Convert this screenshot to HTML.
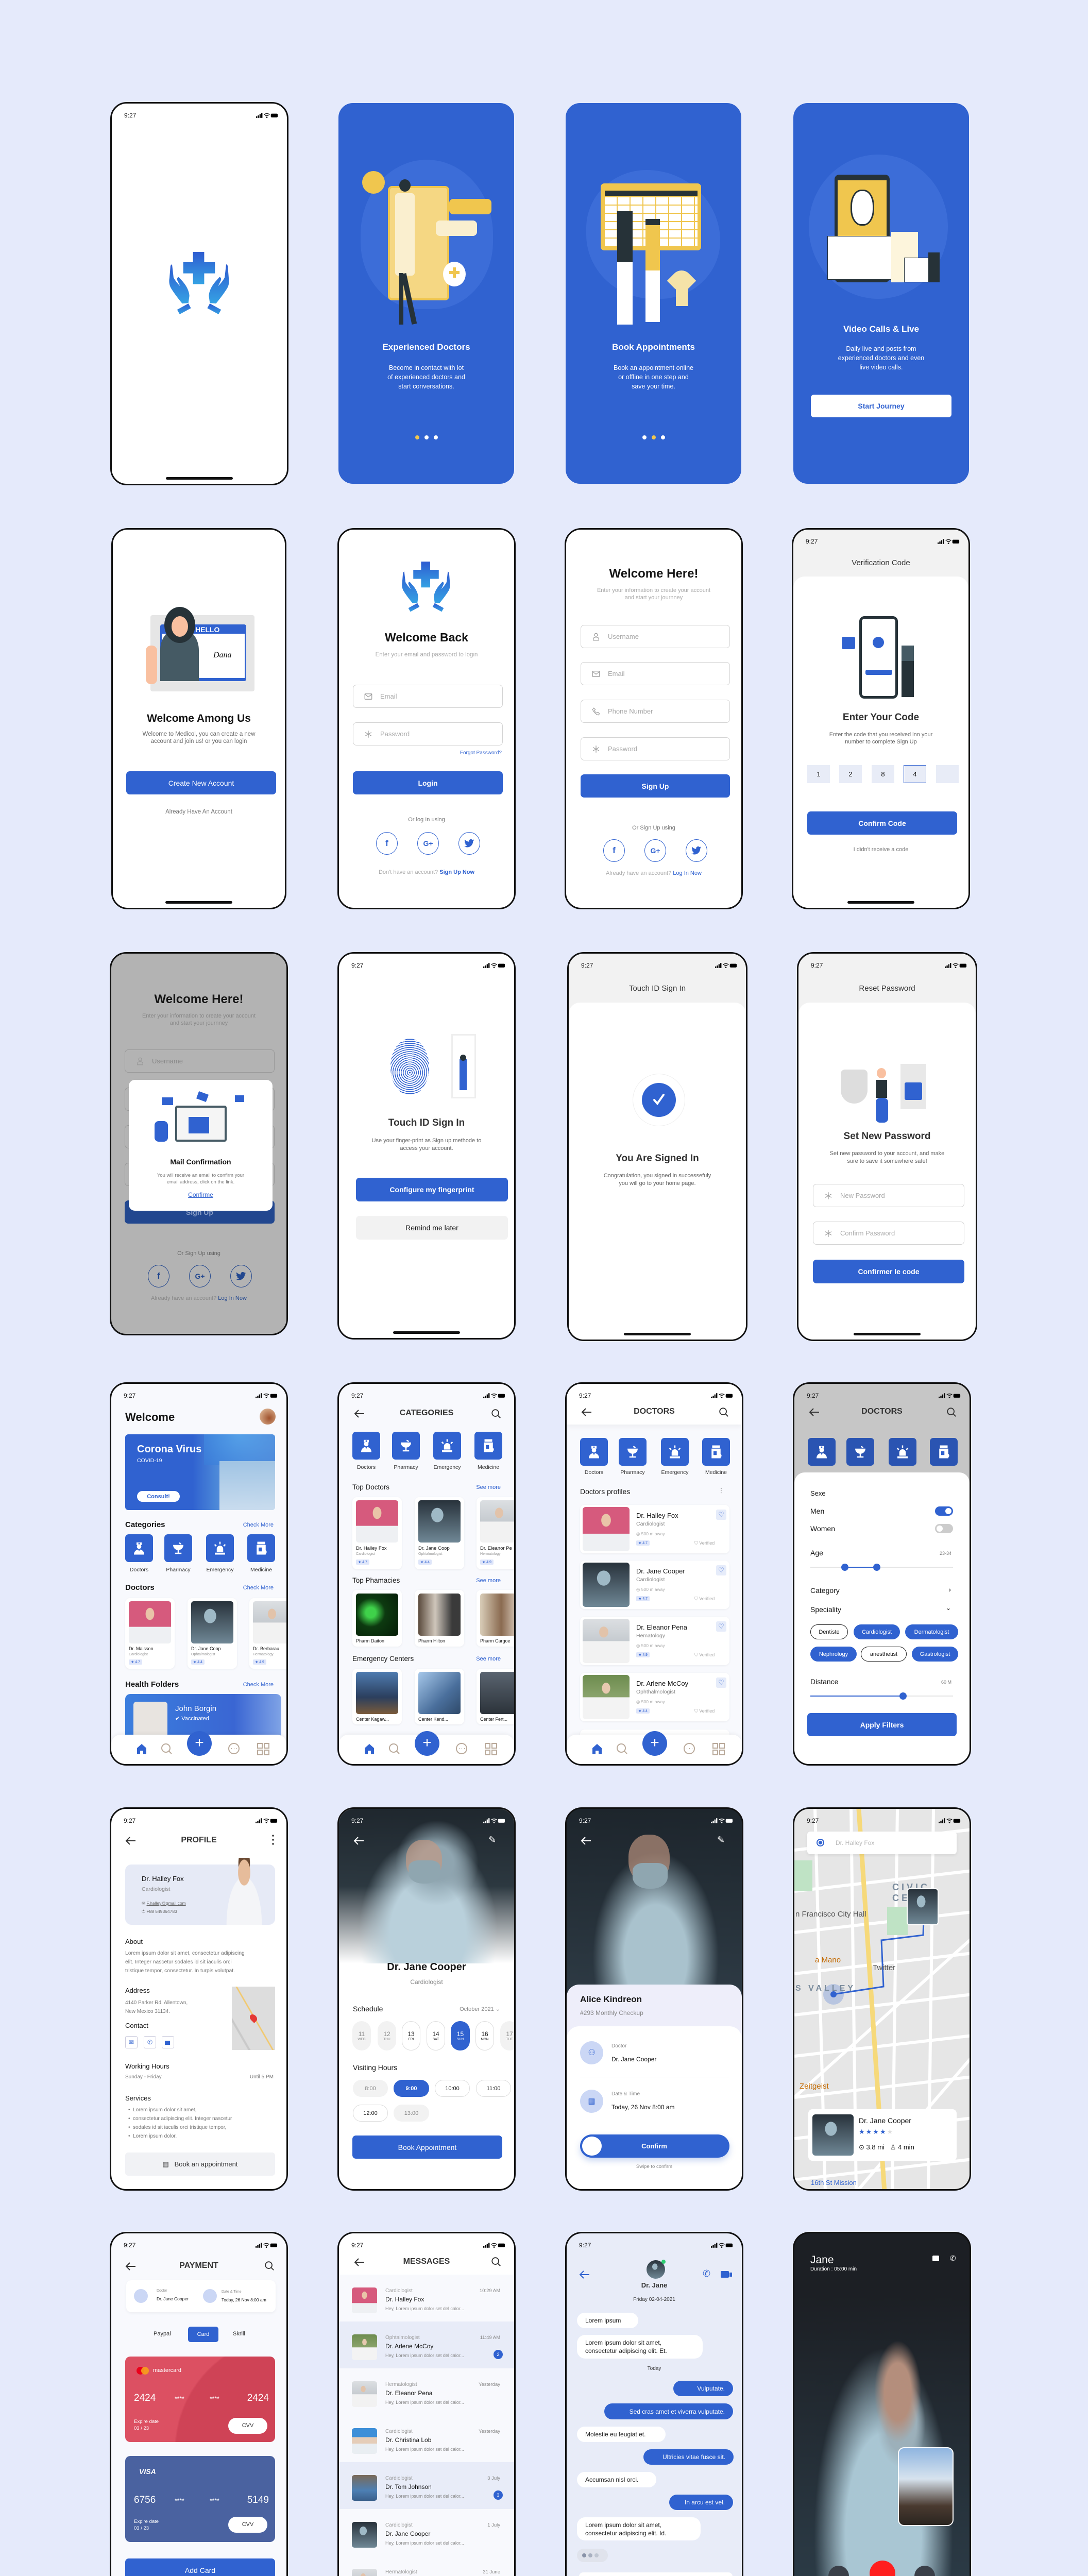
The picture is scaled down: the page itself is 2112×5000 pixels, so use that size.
<!DOCTYPE html>
<html><head><meta charset="utf-8">
<style>
*{box-sizing:border-box;margin:0;padding:0}
body{width:2112px;height:5000px;background:#e5eafb;font-family:"Liberation Sans",sans-serif;color:#151515;position:relative;overflow:hidden}
.p{position:absolute;width:346px;height:744px;border:3px solid #111;border-radius:32px;background:#fff;overflow:hidden}
.p.cut{height:668px !important;border-bottom:0;border-radius:32px 32px 0 0}
.bc{position:absolute;width:341px;height:739px;border-radius:28px;background:#3062d0;overflow:hidden;color:#fff}
.a{position:absolute}
.c{position:absolute;left:0;right:0;text-align:center}
.tm{position:absolute;left:24px;top:16px;font-size:12px}
.sb{position:absolute;right:16px;top:17px;width:44px;height:12px}
.hb{position:absolute;left:50%;bottom:8px;width:130px;height:5px;margin-left:-65px;background:#111;border-radius:3px}
.btn{position:absolute;background:#3062d0;color:#fff;border-radius:7px;display:flex;align-items:center;justify-content:center;font-weight:bold;font-size:14px}
.fld{position:absolute;left:28px;width:290px;height:45px;border:1px solid #d4d4d4;border-radius:7px;color:#aaa;font-size:13px;display:flex;align-items:center;padding-left:52px}
.fld svg{position:absolute;left:20px;top:13px;width:18px;height:18px}
.soc{position:absolute;width:42px;height:44px;border:1.5px solid #3062d0;border-radius:50%;display:flex;align-items:center;justify-content:center;color:#3062d0;font-weight:bold;font-size:17px}
.h1{font-weight:bold;font-size:21px}
.tile{position:absolute;width:54px;height:54px;background:#3062d0;border-radius:7px;display:flex;align-items:center;justify-content:center}
.tile svg{width:30px;height:30px;fill:#fff}
.tl{position:absolute;width:80px;text-align:center;font-size:10.5px;color:#333}
.card{position:absolute;background:#fff;border-radius:9px;box-shadow:0 1px 4px rgba(0,0,0,.06)}
.nav{position:absolute;left:0;right:0;bottom:0;height:57px;background:#fff;border-radius:18px 18px 0 0;box-shadow:0 -2px 8px rgba(0,0,0,.06)}
.fab{position:absolute;width:48px;height:48px;border-radius:50%;background:#3062d0;color:#fff;font-size:30px;line-height:46px;text-align:center;left:147px;top:674px}
.pill{position:absolute;border-radius:16px;display:flex;align-items:center;justify-content:center;font-size:11px}
.rate{position:absolute;background:#dfe6fa;color:#3062d0;font-size:7px;padding:1px 4px;border-radius:2px}
.hd{font-weight:bold;font-size:16px;color:#333}
.ph1{background:radial-gradient(ellipse at 50% 30%,#e9c4a8 0 14%,transparent 15%),linear-gradient(#d65a7d 0,#d65a7d 60%,#eef0f3 61%)}
.ph2{background:radial-gradient(ellipse at 45% 35%,#9fb9c6 0 18%,transparent 19%),linear-gradient(#28323b,#6f8795)}
.ph3{background:radial-gradient(ellipse at 45% 30%,#e2c3aa 0 12%,transparent 13%),linear-gradient(#dcdfe2 0,#c6cbd0 50%,#f2f2f2 51%)}
.ph4{background:radial-gradient(ellipse at 50% 30%,#e7c9af 0 12%,transparent 13%),linear-gradient(#6d8c4f 0,#8aa36b 50%,#f3f3f3 51%)}
.mrow{position:absolute;left:0;right:0;height:91px}
.av{position:absolute;left:25px;top:25px;width:49px;height:50px;border-radius:5px}
.bub{position:absolute;background:#fff;border-radius:16px;font-size:12px;padding:0 16px;display:flex;align-items:center;line-height:16px;color:#222}
.bub.b{background:#3062d0;color:#fff;justify-content:flex-end}
</style></head><body>
<svg width="0" height="0" style="position:absolute">
<symbol id="sb" viewBox="0 0 46 12"><rect x="0" y="8" width="2.5" height="3"/><rect x="3.5" y="6" width="2.5" height="5"/><rect x="7" y="3.5" width="2.5" height="7.5"/><rect x="10.5" y="1" width="2.5" height="10"/><path d="M16.5 4.5a8 8 0 0 1 11 0M18.8 7a5 5 0 0 1 6.4 0" stroke="currentColor" fill="none" stroke-width="1.6"/><circle cx="22" cy="9.8" r="1.4"/><rect x="30" y="2.5" width="14" height="7.5" rx="2"/></symbol>
<linearGradient id="lg" x1="0" y1="0" x2="0" y2="1"><stop offset="0" stop-color="#2e5bd0"/><stop offset="1" stop-color="#35a2e4"/></linearGradient>
<symbol id="logo" viewBox="0 0 130 124"><g fill="url(#lg)"><path d="M53 0h22v20h21v22H75v21H53V42H34V20h19z"/><path d="M9 27l3-3 3 26q4 8 13 17l-5-10q-3-6 2-8l8 9q12 14 13 28l-2 14-12 1q-14-17-22-30-5-9-3-20z"/><path d="M121 27l-3-3-3 26q-4 8-13 17l5-10q3-6-2-8l-8 9q-12 14-13 28l2 14 12 1q14-17 22-30 5-9 3-20z"/><path d="M22 113l22-12 5 9-22 12z"/><path d="M108 113l-22-12-5 9 22 12z"/></g></symbol>
<symbol id="doc" viewBox="0 0 24 24"><path d="M8 3h8v4H8z"/><path d="M11 3.7h2v2.6h-2z" fill="#3062d0"/><circle cx="12" cy="9.5" r="3.5"/><path d="M4 22c0-5 3.5-8 8-8s8 3 8 8z"/><path d="M10.5 14l1.5 3 1.5-3z" fill="#3062d0"/></symbol>
<symbol id="pha" viewBox="0 0 24 24"><path d="M4 7h16a8 8 0 0 1-16 0z"/><path d="M11 14h2v5h4v2H7v-2h4z"/><path d="M13 3a4 4 0 0 1 4 3h-2a2 2 0 0 0-2-1z"/></symbol>
<symbol id="eme" viewBox="0 0 24 24"><path d="M7 18v-5a5 5 0 0 1 10 0v5zM4 19h16v3H4zM11 2h2v4h-2zM3 7l1.5-1.5 2.5 2.5L5.5 9.5zM21 7l-1.5-1.5L17 8l1.5 1.5z"/></symbol>
<symbol id="med" viewBox="0 0 24 24"><path d="M6 2h12v4H6zM5 7h14v15H5z"/><path d="M8 11h5v6H8z" fill="#3062d0"/><circle cx="17" cy="18" r="3.5"/></symbol>
<symbol id="back" viewBox="0 0 24 24"><path d="M21 12H4M10 5l-7 7 7 7" fill="none" stroke="currentColor" stroke-width="2"/></symbol>
<symbol id="srch" viewBox="0 0 24 24"><circle cx="10.5" cy="10.5" r="7" fill="none" stroke="currentColor" stroke-width="2"/><path d="M16 16l5 5" stroke="currentColor" stroke-width="2"/></symbol>
<symbol id="mail" viewBox="0 0 24 24"><rect x="3" y="5" width="18" height="14" rx="1" fill="none" stroke="#999" stroke-width="1.6"/><path d="M3 6l9 7 9-7" fill="none" stroke="#999" stroke-width="1.6"/></symbol>
<symbol id="ast" viewBox="0 0 24 24"><path d="M12 3v18M4 7.5l16 9M20 7.5l-16 9" stroke="#999" stroke-width="1.6"/></symbol>
<symbol id="usr" viewBox="0 0 24 24"><circle cx="12" cy="7" r="4" fill="none" stroke="#999" stroke-width="1.6"/><path d="M5 21v-3a5 5 0 0 1 5-5h4a5 5 0 0 1 5 5v3z" fill="none" stroke="#999" stroke-width="1.6"/></symbol>
<symbol id="tel" viewBox="0 0 24 24"><path d="M6 3l4 4-2 3q2 4 6 6l3-2 4 4-3 3Q10 20 3 7z" fill="none" stroke="#999" stroke-width="1.6"/></symbol>
<symbol id="navi" viewBox="0 0 290 30"><path d="M40 14l9-8 9 8v12h-6v-7h-6v7h-6z" fill="#3062d0"/><circle cx="96" cy="14" r="8" fill="none" stroke="#b9a99a" stroke-width="2"/><path d="M102 20l5 5" stroke="#b9a99a" stroke-width="2"/><circle cx="228" cy="15" r="10" fill="none" stroke="#b9a99a" stroke-width="2"/><path d="M223 15h1M228 15h1M233 15h1" stroke="#b9a99a" stroke-width="2"/><g fill="none" stroke="#b9a99a" stroke-width="2"><rect x="274" y="5" width="9" height="9"/><rect x="287" y="5" width="9" height="9"/><rect x="274" y="18" width="9" height="9"/><rect x="287" y="18" width="9" height="9"/></g></symbol>
<symbol id="tw" viewBox="0 0 24 20"><path d="M23 2.5a9 9 0 0 1-2.7.8A4.7 4.7 0 0 0 22.3.7a9 9 0 0 1-3 1.1 4.7 4.7 0 0 0-8 4.3A13.3 13.3 0 0 1 1.7 1.2a4.7 4.7 0 0 0 1.5 6.3 4.6 4.6 0 0 1-2.1-.6 4.7 4.7 0 0 0 3.7 4.6 4.7 4.7 0 0 1-2.1.1 4.7 4.7 0 0 0 4.4 3.3A9.4 9.4 0 0 1 0 16.8 13.3 13.3 0 0 0 7.2 19c8.7 0 13.4-7.2 13.4-13.4v-.6A9.5 9.5 0 0 0 23 2.5z"/></symbol>
</svg>

<!-- ROW 1 -->
<div class="p" style="left:214px;top:198px">
<div class="tm">9:27</div><svg class="sb"><use href="#sb"/></svg>
<svg class="a" style="left:105px;top:288px;width:129px;height:123px"><use href="#logo"/></svg>
<div class="hb"></div></div>

<div class="bc" style="left:657px;top:200px">
<div class="a" style="left:43px;top:110px;width:257px;height:290px;border-radius:50% 50% 45% 45%;background:#3c6dd8"></div>
<div class="a" style="left:96px;top:161px;width:119px;height:222px;border-radius:8px;background:#f5d783;border:4px solid #f0c64e"></div>
<div class="a" style="left:110px;top:175px;width:38px;height:160px;background:#faefcf;border-radius:6px"></div>
<div class="a" style="left:118px;top:330px;width:8px;height:100px;background:#263238"></div><div class="a" style="left:132px;top:330px;width:10px;height:100px;background:#263238;transform:rotate(-12deg)"></div>
<div class="a" style="left:118px;top:148px;width:22px;height:24px;border-radius:50%;background:#263238"></div>
<div class="a" style="left:46px;top:132px;width:44px;height:44px;border-radius:50%;background:#f0c64e"></div>
<div class="a" style="left:203px;top:308px;width:44px;height:48px;border-radius:50%;background:#fff"></div>
<div class="a" style="left:215px;top:326px;width:20px;height:6px;background:#f0c64e"></div><div class="a" style="left:222px;top:319px;width:6px;height:20px;background:#f0c64e"></div>
<div class="a" style="left:215px;top:186px;width:82px;height:30px;border-radius:8px;background:#f0c64e"></div>
<div class="a" style="left:189px;top:228px;width:80px;height:30px;border-radius:8px;background:#faefcf"></div>
<div class="c" style="top:464px;font-size:17px;font-weight:bold">Experienced Doctors</div>
<div class="c" style="top:505px;font-size:12.5px;line-height:18px">Become in contact with lot<br>of experienced doctors and<br>start conversations.</div>
<div class="c" style="top:645px;font-size:0"><span style="display:inline-block;width:8px;height:8px;border-radius:50%;background:#f0c64e;margin:0 5px"></span><span style="display:inline-block;width:8px;height:8px;border-radius:50%;background:#fff;margin:0 5px"></span><span style="display:inline-block;width:8px;height:8px;border-radius:50%;background:#fff;margin:0 5px"></span></div>
</div>

<div class="bc" style="left:1098px;top:200px">
<div class="a" style="left:40px;top:130px;width:260px;height:250px;border-radius:45% 55% 45% 50%;background:#3c6dd8"></div>
<div class="a" style="left:68px;top:156px;width:195px;height:130px;border-radius:7px;background:#f0c64e"></div>
<div class="a" style="left:76px;top:170px;width:180px;height:10px;background:#263238"></div>
<div class="a" style="left:76px;top:183px;width:180px;height:95px;background:repeating-linear-gradient(90deg,#fff 0 23px,#f0c64e 23px 25px),#fff"></div>
<div class="a" style="left:76px;top:183px;width:180px;height:95px;background:repeating-linear-gradient(#0000 0 14px,#f0c64e 14px 16px)"></div>
<div class="a" style="left:100px;top:210px;width:30px;height:220px;background:linear-gradient(#263238 0 45%,#fff 45%)"></div>
<div class="a" style="left:155px;top:225px;width:28px;height:200px;background:linear-gradient(#263238 0 6%,#f0c64e 6% 50%,#fff 50%)"></div>
<div class="a" style="left:214px;top:360px;width:24px;height:34px;background:#f5e3a8"></div>
<div class="a" style="left:205px;top:325px;width:40px;height:40px;border-radius:50% 0;background:#f5e3a8;transform:rotate(45deg)"></div>
<div class="c" style="top:464px;font-size:17px;font-weight:bold">Book Appointments</div>
<div class="c" style="top:505px;font-size:12.5px;line-height:18px">Book an appointment online<br>or offline in one step and<br>save your time.</div>
<div class="c" style="top:645px;font-size:0"><span style="display:inline-block;width:8px;height:8px;border-radius:50%;background:#fff;margin:0 5px"></span><span style="display:inline-block;width:8px;height:8px;border-radius:50%;background:#f0c64e;margin:0 5px"></span><span style="display:inline-block;width:8px;height:8px;border-radius:50%;background:#fff;margin:0 5px"></span></div>
</div>

<div class="bc" style="left:1540px;top:200px">
<div class="a" style="left:30px;top:100px;width:270px;height:280px;border-radius:50%;background:#3c6dd8"></div>
<div class="a" style="left:80px;top:139px;width:107px;height:209px;border-radius:9px;background:#263238"></div>
<div class="a" style="left:86px;top:150px;width:95px;height:180px;background:#f0c64e"></div>
<div class="a" style="left:111px;top:168px;width:46px;height:70px;border-radius:45%;background:#fff;border:3px solid #263238"></div>
<div class="a" style="left:66px;top:258px;width:135px;height:85px;background:#fff;border:1px solid #263238"></div>
<div class="a" style="left:190px;top:250px;width:52px;height:98px;background:#fdf5dc"></div>
<div class="a" style="left:215px;top:300px;width:58px;height:48px;background:#fff;border:1px solid #263238"></div>
<div class="a" style="left:262px;top:290px;width:22px;height:58px;background:#263238"></div>
<div class="c" style="top:429px;font-size:17px;font-weight:bold">Video Calls &amp; Live</div>
<div class="c" style="top:468px;font-size:12.5px;line-height:18px">Daily live and posts from<br>experienced doctors and even<br>live video calls.</div>
<div class="a" style="left:34px;top:566px;width:273px;height:44px;border-radius:6px;background:#fff;color:#3062d0;font-size:14px;font-weight:bold;display:flex;align-items:center;justify-content:center">Start Journey</div>
</div>

<!-- ROW 2 -->
<div class="p" style="left:216px;top:1025px;width:340px;height:740px">
<div class="a" style="left:73px;top:166px;width:202px;height:148px;background:#e6e6e6;border-radius:4px"></div>
<div class="a" style="left:92px;top:184px;width:167px;height:110px;background:#3062d0;border-radius:4px"></div>
<div class="a" style="left:96px;top:202px;width:160px;height:86px;background:#fff"></div>
<div class="a" style="left:160px;top:186px;font-size:14px;color:#fff;font-weight:bold">HELLO</div>
<div class="a" style="left:195px;top:235px;font-size:16px;font-style:italic;font-family:'Liberation Serif',serif">Dana</div>
<div class="a" style="left:92px;top:194px;width:75px;height:100px;border-radius:40% 40% 0 0;background:#455a64"></div>
<div class="a" style="left:100px;top:150px;width:60px;height:70px;border-radius:50%;background:#263238"></div>
<div class="a" style="left:114px;top:168px;width:32px;height:40px;border-radius:50%;background:#f9c0a0"></div>
<div class="a" style="left:64px;top:225px;width:22px;height:75px;border-radius:10px;background:#f9c0a0"></div>
<div class="c" style="top:355px"><span class="h1">Welcome Among Us</span></div>
<div class="c" style="top:390px;font-size:11.5px;color:#666;line-height:14px">Welcome to Medicol, you can create a new<br>account and join us! or you can login</div>
<div class="btn" style="left:26px;top:469px;width:291px;height:45px;font-weight:normal">Create New Account</div>
<div class="c" style="top:542px;font-size:11.5px;color:#777">Already Have An Account</div>
<div class="hb"></div></div>

<div class="p" style="left:655px;top:1025px;width:346px;height:740px">
<svg class="a" style="left:117px;top:62px;width:104px;height:99px"><use href="#logo"/></svg>
<div class="c" style="top:196px;font-size:23px;font-weight:bold">Welcome Back</div>
<div class="c" style="top:237px;font-size:11.5px;color:#aaa">Enter your email and password to login</div>
<div class="fld" style="top:301px;left:27px;width:291px"><svg><use href="#mail"/></svg>Email</div>
<div class="fld" style="top:374px;left:27px;width:291px"><svg><use href="#ast"/></svg>Password</div>
<div class="a" style="right:24px;top:428px;font-size:10px;color:#3062d0">Forgot Password?</div>
<div class="btn" style="left:27px;top:469px;width:291px;height:45px">Login</div>
<div class="c" style="top:557px;font-size:11px;color:#777">Or log In using</div>
<div class="soc" style="left:72px;top:587px">f</div><div class="soc" style="left:152px;top:587px;font-size:14px">G+</div><div class="soc" style="left:232px;top:587px"><svg width="20" height="18" fill="#3062d0"><use href="#tw"/></svg></div>
<div class="c" style="top:659px;font-size:11px;color:#aaa">Don't have an account? <b style="color:#3062d0">Sign Up Now</b></div>
</div>

<div class="p" style="left:1096px;top:1025px;width:346px;height:740px">
<div class="c" style="top:72px;font-size:24px;font-weight:bold">Welcome Here!</div>
<div class="c" style="top:111px;font-size:11px;color:#aaa;line-height:14px">Enter your information to create your account<br>and start your journney</div>
<div class="fld" style="top:185px"><svg><use href="#usr"/></svg>Username</div>
<div class="fld" style="top:257px"><svg><use href="#mail"/></svg>Email</div>
<div class="fld" style="top:330px"><svg><use href="#tel"/></svg>Phone Number</div>
<div class="fld" style="top:403px"><svg><use href="#ast"/></svg>Password</div>
<div class="btn" style="left:28px;top:475px;width:290px;height:45px">Sign Up</div>
<div class="c" style="top:573px;font-size:11px;color:#777">Or Sign Up using</div>
<div class="soc" style="left:72px;top:601px">f</div><div class="soc" style="left:152px;top:601px;font-size:14px">G+</div><div class="soc" style="left:232px;top:601px"><svg width="20" height="18" fill="#3062d0"><use href="#tw"/></svg></div>
<div class="c" style="top:661px;font-size:11px;color:#aaa">Already have an account? <span style="color:#3062d0">Log In Now</span></div>
</div>

<div class="p" style="left:1537px;top:1025px;width:346px;height:740px;background:#f2f2f2">
<div class="tm">9:27</div><svg class="sb"><use href="#sb"/></svg>
<div class="c" style="top:56px;font-size:15px;color:#333">Verification Code</div>
<div class="a" style="left:0;right:0;top:91px;bottom:0;background:#fff;border-radius:22px 22px 0 0"></div>
<div class="a" style="left:128px;top:168px;width:75px;height:160px;border:5px solid #263238;border-radius:10px;background:#fff"></div>
<div class="a" style="left:154px;top:208px;width:22px;height:22px;border-radius:50%;background:#3062d0"></div>
<div class="a" style="left:140px;top:272px;width:52px;height:10px;border-radius:3px;background:#3062d0"></div>
<div class="a" style="left:94px;top:208px;width:26px;height:24px;border-radius:3px;background:#3062d0"></div>
<div class="a" style="left:210px;top:225px;width:24px;height:100px;background:linear-gradient(#455a64 0 30%,#263238 30%)"></div>
<div class="c" style="top:354px;font-size:19px;font-weight:bold;color:#333">Enter Your Code</div>
<div class="c" style="top:391px;font-size:11px;color:#666;line-height:14px">Enter the code that you received inn your<br>number to complete Sign Up</div>
<div class="a" style="left:27px;top:457px;width:44px;height:35px;background:#e8ecf7;font-size:13px;display:flex;align-items:center;justify-content:center">1</div>
<div class="a" style="left:89px;top:457px;width:44px;height:35px;background:#e8ecf7;font-size:13px;display:flex;align-items:center;justify-content:center">2</div>
<div class="a" style="left:152px;top:457px;width:44px;height:35px;background:#e8ecf7;font-size:13px;display:flex;align-items:center;justify-content:center">8</div>
<div class="a" style="left:214px;top:457px;width:44px;height:35px;background:#e8ecf7;border:1.5px solid #3062d0;font-size:13px;display:flex;align-items:center;justify-content:center">4</div>
<div class="a" style="left:277px;top:457px;width:44px;height:35px;background:#e8ecf7"></div>
<div class="btn" style="left:27px;top:547px;width:291px;height:45px">Confirm Code</div>
<div class="c" style="top:615px;font-size:11px;color:#777">I didn't receive a code</div>
<div class="hb"></div></div>

<!-- ROW 3 -->
<div class="p" style="left:213px;top:1848px;width:346px;height:744px;background:#b3b3b3">
<div class="c" style="top:75px;font-size:24px;font-weight:bold">Welcome Here!</div>
<div class="c" style="top:114px;font-size:11px;color:#888;line-height:14px">Enter your information to create your account<br>and start your journney</div>
<div class="fld" style="top:186px;left:26px;width:291px;border-color:#999;color:#888"><svg><use href="#usr"/></svg>Username</div>
<div class="fld" style="top:260px;left:26px;width:291px;border-color:#999"></div>
<div class="fld" style="top:333px;left:26px;width:291px;border-color:#999"></div>
<div class="fld" style="top:406px;left:26px;width:291px;border-color:#999"></div>
<div class="btn" style="left:26px;top:479px;width:291px;height:45px;background:#22478f;color:#8a9fc7">Sign Up</div>
<div class="a" style="left:34px;top:245px;width:279px;height:254px;background:#fff;border-radius:12px">
 <div class="a" style="left:90px;top:50px;width:100px;height:70px;border:4px solid #455a64;border-radius:4px;background:#f5f5f5"></div>
 <div class="a" style="left:116px;top:72px;width:40px;height:32px;background:#3062d0"></div>
 <div class="a" style="left:64px;top:34px;width:22px;height:15px;background:#3062d0"></div>
 <div class="a" style="left:133px;top:25px;width:20px;height:15px;background:#3062d0;transform:rotate(20deg)"></div>
 <div class="a" style="left:206px;top:30px;width:18px;height:13px;background:#3062d0"></div>
 <div class="a" style="left:50px;top:80px;width:26px;height:40px;background:#3062d0;border-radius:8px"></div>
 <div class="c" style="top:151px;font-size:14px;font-weight:bold">Mail Confirmation</div>
 <div class="c" style="top:179px;font-size:9.5px;color:#777;line-height:13px">You will receive an email to confirm your<br>email address, click on the link.</div>
 <div class="c" style="top:216px;font-size:12px;color:#3062d0;text-decoration:underline">Confirme</div>
</div>
<div class="c" style="top:576px;font-size:11px;color:#666">Or Sign Up using</div>
<div class="soc" style="left:71px;top:604px;border-color:#22478f;color:#22478f">f</div><div class="soc" style="left:151px;top:604px;font-size:14px;border-color:#22478f;color:#22478f">G+</div><div class="soc" style="left:231px;top:604px;border-color:#22478f"><svg width="20" height="18" fill="#22478f"><use href="#tw"/></svg></div>
<div class="c" style="top:663px;font-size:11px;color:#888">Already have an account? <span style="color:#22478f">Log In Now</span></div>
</div>

<div class="p" style="left:655px;top:1848px;width:346px;height:752px">
<div class="tm">9:27</div><svg class="sb"><use href="#sb"/></svg>
<div class="a" style="left:100px;top:165px;width:75px;height:110px;border-radius:50%;background:repeating-radial-gradient(circle at 50% 60%,#3062d0 0 1.5px,#fff 1.5px 4px)"></div>
<div class="a" style="left:218px;top:156px;width:48px;height:125px;border:3px solid #eee"></div>
<div class="a" style="left:234px;top:205px;width:14px;height:60px;background:#3062d0"></div>
<div class="a" style="left:235px;top:196px;width:12px;height:12px;border-radius:50%;background:#263238"></div>
<div class="c" style="top:318px;font-size:19px;font-weight:bold;color:#333">Touch ID Sign In</div>
<div class="c" style="top:356px;font-size:11px;color:#666;line-height:15px">Use your finger-print as Sign up methode to<br>access your account.</div>
<div class="btn" style="left:33px;top:435px;width:295px;height:46px">Configure my fingerprint</div>
<div class="a" style="left:33px;top:509px;width:295px;height:46px;border-radius:7px;background:#f2f2f2;font-size:14px;display:flex;align-items:center;justify-content:center">Remind me later</div>
<div class="hb"></div></div>

<div class="p" style="left:1101px;top:1848px;width:350px;height:755px;background:#f2f2f2">
<div class="tm">9:27</div><svg class="sb"><use href="#sb"/></svg>
<div class="c" style="top:59px;font-size:15px;color:#333">Touch ID Sign In</div>
<div class="a" style="left:0;right:0;top:95px;bottom:0;background:#fff;border-radius:22px 22px 0 0"></div>
<div class="a" style="left:124px;top:233px;width:102px;height:102px;border-radius:50%;border:1px solid #eee"></div>
<div class="a" style="left:142px;top:251px;width:66px;height:66px;border-radius:50%;background:#3062d0"></div>
<svg class="a" style="left:160px;top:268px;width:30px;height:30px" viewBox="0 0 30 30"><path d="M6 16l6 7 12-17" fill="none" stroke="#fff" stroke-width="4" stroke-linecap="round"/></svg>
<div class="c" style="top:387px;font-size:19px;font-weight:bold;color:#333">You Are Signed In</div>
<div class="c" style="top:424px;font-size:11px;color:#666;line-height:15px">Congratulation, you signed in successefuly<br>you will go to your home page.</div>
<div class="hb"></div></div>

<div class="p" style="left:1547px;top:1848px;width:350px;height:755px;background:#f2f2f2">
<div class="tm">9:27</div><svg class="sb"><use href="#sb"/></svg>
<div class="c" style="top:59px;font-size:15px;color:#333">Reset Password</div>
<div class="a" style="left:0;right:0;top:95px;bottom:0;background:#fff;border-radius:22px 22px 0 0"></div>
<div class="a" style="left:82px;top:225px;width:52px;height:66px;border-radius:8px 8px 26px 26px;background:#ddd"></div>
<div class="a" style="left:198px;top:214px;width:50px;height:88px;background:#e8e8e8"></div>
<div class="a" style="left:206px;top:250px;width:34px;height:34px;background:#3062d0;border-radius:3px"></div>
<div class="a" style="left:150px;top:245px;width:22px;height:35px;background:#263238"></div>
<div class="a" style="left:150px;top:280px;width:24px;height:48px;background:#3062d0;border-radius:8px"></div>
<div class="a" style="left:152px;top:222px;width:18px;height:20px;border-radius:50%;background:#f9c0a0"></div>
<div class="c" style="top:344px;font-size:19px;font-weight:bold;color:#333">Set New Password</div>
<div class="c" style="top:381px;font-size:11px;color:#666;line-height:15px">Set new password to your account, and make<br>sure to save it somewhere safe!</div>
<div class="fld" style="top:447px;width:294px"><svg><use href="#ast"/></svg>New Password</div>
<div class="fld" style="top:520px;width:294px"><svg><use href="#ast"/></svg>Confirm Password</div>
<div class="btn" style="left:28px;top:594px;width:294px;height:46px">Confirmer le code</div>
<div class="hb"></div></div>

<!-- ROW 4 -->
<div class="p" style="left:213px;top:2683px;width:346px;height:744px;background:#f8f9fd">
<div class="tm">9:27</div><svg class="sb"><use href="#sb"/></svg>
<div class="a" style="left:27px;top:52px;font-size:22px;font-weight:bold">Welcome</div>
<div class="a" style="left:288px;top:48px;width:31px;height:31px;border-radius:50%;background:radial-gradient(circle at 60% 60%,#a0522d,#e9c9a8)"></div>
<div class="a" style="left:27px;top:98px;width:291px;height:147px;border-radius:6px;background:linear-gradient(90deg,#3062d0 0 45%,#4a86d8 60%,#9cc2e6 100%)"></div>
<div class="a" style="left:180px;top:98px;width:138px;height:60px;background:radial-gradient(ellipse at 50% 0,#4fa0ea,#3a7bd8);border-radius:0 6px 0 0;opacity:.8"></div>
<div class="a" style="left:210px;top:150px;width:108px;height:95px;background:linear-gradient(#a0c4e4,#c9dcee);border-radius:0 0 6px 0"></div>
<div class="a" style="left:50px;top:116px;font-size:20px;font-weight:bold;color:#fff">Corona Virus</div>
<div class="a" style="left:50px;top:143px;font-size:10.5px;color:#fff">COVID-19</div>
<div class="pill" style="left:50px;top:208px;width:83px;height:21px;background:#fff;color:#3062d0;font-weight:bold">Consult!</div>
<div class="a" style="left:27px;top:265px;font-size:15px;font-weight:bold">Categories</div><div class="a" style="right:25px;top:268px;font-size:11px;color:#3062d0">Check More</div>
<div class="tile" style="left:27px;top:292px"><svg><use href="#doc"/></svg></div><div class="tile" style="left:103px;top:292px"><svg><use href="#pha"/></svg></div><div class="tile" style="left:184px;top:292px"><svg><use href="#eme"/></svg></div><div class="tile" style="left:264px;top:292px"><svg><use href="#med"/></svg></div>
<div class="tl" style="left:14px;top:355px">Doctors</div><div class="tl" style="left:90px;top:355px">Pharmacy</div><div class="tl" style="left:171px;top:355px">Emergency</div><div class="tl" style="left:251px;top:355px">Medicine</div>
<div class="a" style="left:27px;top:387px;font-size:15px;font-weight:bold">Doctors</div><div class="a" style="right:25px;top:390px;font-size:11px;color:#3062d0">Check More</div>
<div class="card" style="left:27px;top:416px;width:96px;height:137px"><div class="a ph1" style="left:7px;top:6px;width:82px;height:82px;border-radius:5px"></div><div class="a" style="left:7px;top:93px;font-size:9px">Dr. Maisson</div><div class="a" style="left:7px;top:106px;font-size:7px;color:#999">Cardiologist</div><div class="rate" style="left:7px;top:119px">★ 4.7</div></div>
<div class="card" style="left:148px;top:416px;width:96px;height:137px"><div class="a ph2" style="left:7px;top:6px;width:82px;height:82px;border-radius:5px"></div><div class="a" style="left:7px;top:93px;font-size:9px">Dr. Jane Coop</div><div class="a" style="left:7px;top:106px;font-size:7px;color:#999">Ophtalmologist</div><div class="rate" style="left:7px;top:119px">★ 4.4</div></div>
<div class="card" style="left:268px;top:416px;width:96px;height:137px"><div class="a ph3" style="left:7px;top:6px;width:82px;height:82px;border-radius:5px"></div><div class="a" style="left:7px;top:93px;font-size:9px">Dr. Berbarau</div><div class="a" style="left:7px;top:106px;font-size:7px;color:#999">Hermatology</div><div class="rate" style="left:7px;top:119px">★ 4.9</div></div>
<div class="a" style="left:27px;top:575px;font-size:15px;font-weight:bold">Health Folders</div><div class="a" style="right:25px;top:578px;font-size:11px;color:#3062d0">Check More</div>
<div class="a" style="left:27px;top:602px;width:303px;height:100px;border-radius:10px;background:linear-gradient(90deg,#3b7ede,#3a66d3 70%,#7fa3e6)"></div>
<div class="a" style="left:43px;top:617px;width:66px;height:80px;border-radius:6px;background:#e8e4e0"></div>
<div class="a" style="left:124px;top:622px;font-size:15px;color:#fff">John Borgin</div>
<div class="a" style="left:124px;top:643px;font-size:11px;color:#fff">✔ Vaccinated</div>
<div class="nav"><svg class="a" style="left:0;top:12px;width:310px;height:30px" viewBox="0 0 310 30"><use href="#navi"/></svg></div>
<div class="fab">+</div></div>

<div class="p" style="left:655px;top:2683px;width:346px;height:744px;background:#f8f9fd">
<div class="tm">9:27</div><svg class="sb"><use href="#sb"/></svg>
<svg class="a" style="left:27px;top:46px;width:26px;height:24px;color:#333"><use href="#back"/></svg>
<div class="c hd" style="top:48px">CATEGORIES</div>
<svg class="a" style="left:294px;top:47px;width:22px;height:22px;color:#333"><use href="#srch"/></svg>
<div class="tile" style="left:26px;top:93px"><svg><use href="#doc"/></svg></div><div class="tile" style="left:103px;top:93px"><svg><use href="#pha"/></svg></div><div class="tile" style="left:183px;top:93px"><svg><use href="#eme"/></svg></div><div class="tile" style="left:263px;top:93px"><svg><use href="#med"/></svg></div>
<div class="tl" style="left:13px;top:156px">Doctors</div><div class="tl" style="left:90px;top:156px">Pharmacy</div><div class="tl" style="left:170px;top:156px">Emergency</div><div class="tl" style="left:250px;top:156px">Medicine</div>
<div class="a" style="left:26px;top:193px;font-size:13.5px">Top Doctors</div><div class="a" style="right:26px;top:195px;font-size:11px;color:#3062d0">See more</div>
<div class="card" style="left:26px;top:220px;width:96px;height:140px"><div class="a ph1" style="left:7px;top:6px;width:82px;height:82px;border-radius:5px"></div><div class="a" style="left:7px;top:94px;font-size:9.5px">Dr. Halley Fox</div><div class="a" style="left:7px;top:107px;font-size:7px;color:#999">Cardiologist</div><div class="rate" style="left:7px;top:121px">★ 4.7</div></div>
<div class="card" style="left:147px;top:220px;width:96px;height:140px"><div class="a ph2" style="left:7px;top:6px;width:82px;height:82px;border-radius:5px"></div><div class="a" style="left:7px;top:94px;font-size:9.5px">Dr. Jane Coop</div><div class="a" style="left:7px;top:107px;font-size:7px;color:#999">Ophtalmologist</div><div class="rate" style="left:7px;top:121px">★ 4.4</div></div>
<div class="card" style="left:267px;top:220px;width:96px;height:140px"><div class="a ph3" style="left:7px;top:6px;width:82px;height:82px;border-radius:5px"></div><div class="a" style="left:7px;top:94px;font-size:9.5px">Dr. Eleanor Pe</div><div class="a" style="left:7px;top:107px;font-size:7px;color:#999">Hermatology</div><div class="rate" style="left:7px;top:121px">★ 4.9</div></div>
<div class="a" style="left:26px;top:374px;font-size:13.5px">Top Phamacies</div><div class="a" style="right:26px;top:376px;font-size:11px;color:#3062d0">See more</div>
<div class="card" style="left:26px;top:400px;width:96px;height:110px"><div class="a" style="left:7px;top:7px;width:82px;height:82px;border-radius:5px;background:radial-gradient(circle at 35% 45%,#3fd14a 0 14%,#0d3a10 40%,#061c07)"></div><div class="a" style="left:7px;top:94px;font-size:9px">Pharm Daiton</div></div>
<div class="card" style="left:147px;top:400px;width:96px;height:110px"><div class="a" style="left:7px;top:7px;width:82px;height:82px;border-radius:5px;background:linear-gradient(90deg,#5a4a3c,#cfc6bb 40%,#3a3a3a 80%)"></div><div class="a" style="left:7px;top:94px;font-size:9px">Pharm Hilton</div></div>
<div class="card" style="left:267px;top:400px;width:96px;height:110px"><div class="a" style="left:7px;top:7px;width:82px;height:82px;border-radius:5px;background:linear-gradient(90deg,#d9cdb8,#8a6a50 50%,#f0e8dc)"></div><div class="a" style="left:7px;top:94px;font-size:9px">Pharm Cargoe</div></div>
<div class="a" style="left:26px;top:526px;font-size:13.5px">Emergency Centers</div><div class="a" style="right:26px;top:528px;font-size:11px;color:#3062d0">See more</div>
<div class="card" style="left:26px;top:553px;width:96px;height:108px"><div class="a" style="left:7px;top:6px;width:82px;height:82px;border-radius:5px;background:linear-gradient(#4f7cb0,#2b3f5e 60%,#7a5a3a)"></div><div class="a" style="left:7px;top:93px;font-size:9px">Center Kagaw...</div></div>
<div class="card" style="left:147px;top:553px;width:96px;height:108px"><div class="a" style="left:7px;top:6px;width:82px;height:82px;border-radius:5px;background:linear-gradient(135deg,#a6c8ea,#4a6f9c 60%,#2f4a6a)"></div><div class="a" style="left:7px;top:93px;font-size:9px">Center Kend...</div></div>
<div class="card" style="left:267px;top:553px;width:96px;height:108px"><div class="a" style="left:7px;top:6px;width:82px;height:82px;border-radius:5px;background:linear-gradient(#5a6470,#2c333a)"></div><div class="a" style="left:7px;top:93px;font-size:9px">Center Fert...</div></div>
<div class="nav"><svg class="a" style="left:0;top:12px;width:310px;height:30px" viewBox="0 0 310 30"><use href="#navi"/></svg></div>
<div class="fab">+</div></div>

<div class="p" style="left:1097px;top:2683px;width:346px;height:744px;background:#f8f9fd">
<div class="a" style="left:0;right:0;top:0;height:79px;background:#fff;box-shadow:0 4px 10px rgba(0,0,0,.05)"></div>
<div class="tm">9:27</div><svg class="sb"><use href="#sb"/></svg>
<svg class="a" style="left:26px;top:43px;width:26px;height:24px;color:#333"><use href="#back"/></svg>
<div class="c hd" style="top:45px">DOCTORS</div>
<svg class="a" style="left:294px;top:44px;width:22px;height:22px;color:#333"><use href="#srch"/></svg>
<div class="tile" style="left:26px;top:105px"><svg><use href="#doc"/></svg></div><div class="tile" style="left:101px;top:105px"><svg><use href="#pha"/></svg></div><div class="tile" style="left:183px;top:105px"><svg><use href="#eme"/></svg></div><div class="tile" style="left:263px;top:105px"><svg><use href="#med"/></svg></div>
<div class="tl" style="left:13px;top:166px">Doctors</div><div class="tl" style="left:88px;top:166px">Pharmacy</div><div class="tl" style="left:170px;top:166px">Emergency</div><div class="tl" style="left:250px;top:166px">Medicine</div>
<div class="a" style="left:26px;top:201px;font-size:14px">Doctors profiles</div>
<div class="a" style="left:298px;top:200px;font-size:14px;color:#444">⫶</div>
<div class="card" style="left:26px;top:235px;width:290px;height:94px"><div class="a ph1" style="left:5px;top:4px;width:91px;height:86px;border-radius:6px"></div><div class="a" style="left:109px;top:13px;font-size:13px">Dr. Halley Fox</div><div class="a" style="left:109px;top:31px;font-size:10.5px;color:#888">Cardiologist</div><div class="a" style="left:109px;top:51px;font-size:8.5px;color:#aaa">◎ 500 m away</div><div class="rate" style="left:109px;top:69px">★ 4.7</div><div class="a" style="left:222px;top:69px;font-size:9px;color:#aaa">⛉ Verified</div><div class="a" style="left:264px;top:9px;width:20px;height:20px;background:#e6ecfa;border-radius:3px;color:#3062d0;font-size:13px;text-align:center;line-height:20px">♡</div></div>
<div class="card" style="left:26px;top:343px;width:290px;height:94px"><div class="a ph2" style="left:5px;top:4px;width:91px;height:86px;border-radius:6px"></div><div class="a" style="left:109px;top:13px;font-size:13px">Dr. Jane Cooper</div><div class="a" style="left:109px;top:31px;font-size:10.5px;color:#888">Cardiologist</div><div class="a" style="left:109px;top:51px;font-size:8.5px;color:#aaa">◎ 500 m away</div><div class="rate" style="left:109px;top:69px">★ 4.7</div><div class="a" style="left:222px;top:69px;font-size:9px;color:#aaa">⛉ Verified</div><div class="a" style="left:264px;top:9px;width:20px;height:20px;background:#e6ecfa;border-radius:3px;color:#3062d0;font-size:13px;text-align:center;line-height:20px">♡</div></div>
<div class="card" style="left:26px;top:452px;width:290px;height:94px"><div class="a ph3" style="left:5px;top:4px;width:91px;height:86px;border-radius:6px"></div><div class="a" style="left:109px;top:13px;font-size:13px">Dr. Eleanor Pena</div><div class="a" style="left:109px;top:31px;font-size:10.5px;color:#888">Hematology</div><div class="a" style="left:109px;top:51px;font-size:8.5px;color:#aaa">◎ 500 m away</div><div class="rate" style="left:109px;top:69px">★ 4.9</div><div class="a" style="left:222px;top:69px;font-size:9px;color:#aaa">⛉ Verified</div><div class="a" style="left:264px;top:9px;width:20px;height:20px;background:#e6ecfa;border-radius:3px;color:#3062d0;font-size:13px;text-align:center;line-height:20px">♡</div></div>
<div class="card" style="left:26px;top:561px;width:290px;height:94px"><div class="a ph4" style="left:5px;top:4px;width:91px;height:86px;border-radius:6px"></div><div class="a" style="left:109px;top:13px;font-size:13px">Dr. Arlene McCoy</div><div class="a" style="left:109px;top:31px;font-size:10.5px;color:#888">Ophthalmologist</div><div class="a" style="left:109px;top:51px;font-size:8.5px;color:#aaa">◎ 500 m away</div><div class="rate" style="left:109px;top:69px">★ 4.4</div><div class="a" style="left:222px;top:69px;font-size:9px;color:#aaa">⛉ Verified</div><div class="a" style="left:264px;top:9px;width:20px;height:20px;background:#e6ecfa;border-radius:3px;color:#3062d0;font-size:13px;text-align:center;line-height:20px">♡</div></div>
<div class="card" style="left:26px;top:671px;width:290px;height:60px"></div>
<div class="nav"><svg class="a" style="left:0;top:12px;width:310px;height:30px" viewBox="0 0 310 30"><use href="#navi"/></svg></div>
<div class="fab">+</div></div>

<div class="p" style="left:1539px;top:2683px;width:346px;height:744px;background:#c6c6c6">
<div class="tm">9:27</div><svg class="sb"><use href="#sb"/></svg>
<svg class="a" style="left:26px;top:43px;width:26px;height:24px;color:#333"><use href="#back"/></svg>
<div class="c hd" style="top:45px">DOCTORS</div>
<svg class="a" style="left:294px;top:44px;width:22px;height:22px;color:#333"><use href="#srch"/></svg>
<div class="tile" style="left:26px;top:105px;background:#2a54b2"><svg><use href="#doc"/></svg></div><div class="tile" style="left:101px;top:105px;background:#2a54b2"><svg><use href="#pha"/></svg></div><div class="tile" style="left:183px;top:105px;background:#2a54b2"><svg><use href="#eme"/></svg></div><div class="tile" style="left:263px;top:105px;background:#2a54b2"><svg><use href="#med"/></svg></div>
<div class="a" style="left:0;right:0;top:172px;bottom:0;background:#fff;border-radius:20px 20px 0 0"></div>
<div class="a" style="left:31px;top:205px;font-size:13px">Sexe</div>
<div class="a" style="left:31px;top:239px;font-size:14px">Men</div><div class="a" style="left:273px;top:238px;width:35px;height:18px;border-radius:9px;background:#3062d0"><div class="a" style="right:3px;top:3px;width:12px;height:12px;border-radius:50%;background:#fff"></div></div>
<div class="a" style="left:31px;top:273px;font-size:14px">Women</div><div class="a" style="left:273px;top:272px;width:35px;height:18px;border-radius:9px;background:#ccc"><div class="a" style="left:3px;top:3px;width:12px;height:12px;border-radius:50%;background:#fff"></div></div>
<div class="a" style="left:31px;top:320px;font-size:14px">Age</div><div class="a" style="right:35px;top:324px;font-size:9px;color:#777">23-34</div>
<div class="a" style="left:31px;top:355px;width:277px;height:2px;background:#e5e5e5"></div><div class="a" style="left:98px;top:355px;width:62px;height:2px;background:#3062d0"></div>
<div class="a" style="left:91px;top:349px;width:14px;height:14px;border-radius:50%;background:#3062d0"></div><div class="a" style="left:153px;top:349px;width:14px;height:14px;border-radius:50%;background:#3062d0"></div>
<div class="a" style="left:31px;top:393px;font-size:14px">Category</div><div class="a" style="right:36px;top:391px;font-size:14px">›</div>
<div class="a" style="left:31px;top:430px;font-size:14px">Speciality</div><div class="a" style="right:36px;top:428px;font-size:12px">⌄</div>
<div class="pill" style="left:31px;top:467px;width:73px;height:29px;border:1.5px solid #222">Dentiste</div>
<div class="pill" style="left:115px;top:467px;width:90px;height:29px;background:#3062d0;color:#fff">Cardiologist</div>
<div class="pill" style="left:215px;top:467px;width:103px;height:29px;background:#3062d0;color:#fff">Dermatologist</div>
<div class="pill" style="left:31px;top:510px;width:90px;height:29px;background:#3062d0;color:#fff">Nephrology</div>
<div class="pill" style="left:129px;top:510px;width:89px;height:29px;border:1.5px solid #222">anesthetist</div>
<div class="pill" style="left:228px;top:510px;width:90px;height:29px;background:#3062d0;color:#fff">Gastrologist</div>
<div class="a" style="left:31px;top:570px;font-size:14px">Distance</div><div class="a" style="right:35px;top:574px;font-size:9px;color:#777">60 M</div>
<div class="a" style="left:31px;top:605px;width:277px;height:2px;background:#e5e5e5"></div><div class="a" style="left:31px;top:605px;width:180px;height:2px;background:#3062d0"></div>
<div class="a" style="left:204px;top:599px;width:14px;height:14px;border-radius:50%;background:#3062d0"></div>
<div class="btn" style="left:25px;top:639px;width:290px;height:45px">Apply Filters</div>
</div>

<!-- ROW 5 -->
<div class="p" style="left:213px;top:3508px;width:346px;height:744px">
<div class="tm">9:27</div><svg class="sb"><use href="#sb"/></svg>
<svg class="a" style="left:25px;top:50px;width:26px;height:24px;color:#333"><use href="#back"/></svg>
<div class="c hd" style="top:52px">PROFILE</div>
<div class="a" style="left:312px;top:48px;width:4px;height:24px;background:radial-gradient(circle,#333 1.6px,transparent 2px) 0 0/4px 8px"></div>
<div class="a" style="left:27px;top:108px;width:291px;height:117px;border-radius:12px;background:#e6eaf6"></div>
<div class="a" style="left:210px;top:95px;width:96px;height:130px;background:radial-gradient(ellipse at 50% 22%,#e6bc9b 0 17%,transparent 18%),radial-gradient(ellipse at 50% 8%,#6b4a33 0 16%,transparent 17%),radial-gradient(ellipse at 50% 100%,#f4f5f8 0 50%,transparent 51%)"></div>
<div class="a" style="left:59px;top:128px;font-size:13px">Dr. Halley Fox</div>
<div class="a" style="left:59px;top:150px;font-size:10.5px;color:#888">Cardiologist</div>
<div class="a" style="left:59px;top:178px;font-size:8.5px;color:#666">✉ <u>F.halley@gmail.com</u></div>
<div class="a" style="left:59px;top:194px;font-size:8.5px;color:#666">✆ +88 549364783</div>
<div class="a" style="left:27px;top:250px;font-size:13px">About</div>
<div class="a" style="left:27px;top:272px;font-size:10.3px;color:#777;line-height:17px">Lorem ipsum dolor sit amet, consectetur adipiscing<br>elit. Integer nascetur sodales id sit iaculis orci<br>tristique tempor, consectetur. In turpis volutpat.</div>
<div class="a" style="left:27px;top:345px;font-size:13px">Address</div>
<div class="a" style="left:27px;top:368px;font-size:10px;color:#777;line-height:17px">4140 Parker Rd. Allentown,<br>New Mexico 31134.</div>
<div class="a" style="left:234px;top:345px;width:84px;height:123px;background:linear-gradient(60deg,#ddd 20%,#c9c9c9 21% 23%,#ddd 24% 50%,#f2c86b 51% 52%,#ddd 53%)"></div>
<div class="a" style="left:270px;top:398px;width:12px;height:16px;border-radius:50% 50% 50% 0;background:#e53935;transform:rotate(-45deg)"></div>
<div class="a" style="left:27px;top:413px;font-size:13px">Contact</div>
<div class="a" style="left:27px;top:441px;width:24px;height:24px;border:1px solid #ccd;border-radius:3px;color:#3062d0;font-size:12px;text-align:center;line-height:22px">✉</div>
<div class="a" style="left:63px;top:441px;width:24px;height:24px;border:1px solid #ccd;border-radius:3px;color:#3062d0;font-size:12px;text-align:center;line-height:22px">✆</div>
<div class="a" style="left:98px;top:441px;width:24px;height:24px;border:1px solid #ccd;border-radius:3px"><div class="a" style="left:5px;top:8px;width:10px;height:8px;background:#3062d0"></div></div>
<div class="a" style="left:27px;top:492px;font-size:13px">Working Hours</div>
<div class="a" style="left:27px;top:515px;font-size:10px;color:#777">Sunday - Friday</div><div class="a" style="right:25px;top:515px;font-size:10px;color:#777">Until 5 PM</div>
<div class="a" style="left:27px;top:554px;font-size:13px">Services</div>
<div class="a" style="left:33px;top:576px;font-size:10px;color:#777;line-height:17px">•&nbsp; Lorem ipsum dolor sit amet,<br>•&nbsp; consectetur adipiscing elit. Integer nascetur<br>•&nbsp; sodales id sit iaculis orci tristique tempor,<br>•&nbsp; Lorem ipsum dolor.</div>
<div class="a" style="left:27px;top:667px;width:291px;height:45px;border-radius:6px;background:#f1f2f5;font-size:13px;color:#333;display:flex;align-items:center;justify-content:center">▦&nbsp;&nbsp; Book an appointment</div>
</div>

<div class="p" style="left:655px;top:3508px;width:346px;height:744px">
<div class="a" style="left:0;top:0;width:346px;height:300px;background:radial-gradient(ellipse at 55% 35%,#8fa5b0 0 12%,transparent 30%),radial-gradient(ellipse at 50% 80%,#b9d0db 0 30%,transparent 55%),linear-gradient(#1f272e,#2c3840 50%,#fff 100%)"></div>
<div class="a" style="left:130px;top:60px;width:70px;height:80px;border-radius:45%;background:#c09a86;opacity:.7"></div>
<div class="a" style="left:135px;top:100px;width:62px;height:45px;border-radius:30% 30% 45% 45%;background:#8fa6b0"></div>
<div class="tm" style="color:#fff">9:27</div><svg class="sb" style="color:#fff;fill:#fff"><use href="#sb"/></svg>
<svg class="a" style="left:26px;top:50px;width:26px;height:24px;color:#fff"><use href="#back"/></svg>
<div class="a" style="left:290px;top:50px;color:#fff;font-size:18px">✎</div>
<div class="c" style="top:296px;font-size:20px;font-weight:bold">Dr. Jane Cooper</div>
<div class="c" style="top:329px;font-size:12px;color:#888">Cardiologist</div>
<div class="a" style="left:27px;top:380px;font-size:14px">Schedule</div><div class="a" style="right:27px;top:382px;font-size:11px;color:#888">October 2021 ⌄</div>
<div class="pill" style="left:26px;top:412px;width:36px;height:57px;border-radius:18px;background:#f2f2f2;flex-direction:column;color:#888"><span style="font-size:12px">11</span><span style="font-size:6.5px">WED</span></div>
<div class="pill" style="left:75px;top:412px;width:36px;height:57px;border-radius:18px;background:#f2f2f2;flex-direction:column;color:#888"><span style="font-size:12px">12</span><span style="font-size:6.5px">THU</span></div>
<div class="pill" style="left:122px;top:412px;width:36px;height:57px;border-radius:18px;border:1px solid #ddd;flex-direction:column"><span style="font-size:12px">13</span><span style="font-size:6.5px">FRI</span></div>
<div class="pill" style="left:170px;top:412px;width:36px;height:57px;border-radius:18px;border:1px solid #ddd;flex-direction:column"><span style="font-size:12px">14</span><span style="font-size:6.5px">SAT</span></div>
<div class="pill" style="left:217px;top:412px;width:37px;height:57px;border-radius:18px;background:#3062d0;color:#fff;flex-direction:column"><span style="font-size:12px">15</span><span style="font-size:6.5px">SUN</span></div>
<div class="pill" style="left:265px;top:412px;width:36px;height:57px;border-radius:18px;border:1px solid #ddd;flex-direction:column"><span style="font-size:12px">16</span><span style="font-size:6.5px">MON</span></div>
<div class="pill" style="left:313px;top:412px;width:36px;height:57px;border-radius:18px;background:#f2f2f2;flex-direction:column;color:#888"><span style="font-size:12px">17</span><span style="font-size:6.5px">TUE</span></div>
<div class="a" style="left:27px;top:494px;font-size:14px">Visiting Hours</div>
<div class="pill" style="left:27px;top:526px;width:68px;height:33px;background:#f2f2f2;color:#888">8:00</div>
<div class="pill" style="left:106px;top:526px;width:69px;height:33px;background:#3062d0;color:#fff;font-weight:bold">9:00</div>
<div class="pill" style="left:186px;top:526px;width:68px;height:33px;border:1px solid #ddd">10:00</div>
<div class="pill" style="left:266px;top:526px;width:68px;height:33px;border:1px solid #ddd">11:00</div>
<div class="pill" style="left:27px;top:574px;width:68px;height:33px;border:1px solid #ddd">12:00</div>
<div class="pill" style="left:106px;top:574px;width:69px;height:33px;background:#f2f2f2;color:#888">13:00</div>
<div class="btn" style="left:26px;top:634px;width:291px;height:45px;font-weight:normal">Book Appointment</div>
</div>

<div class="p" style="left:1097px;top:3508px;width:346px;height:744px;background:#1f2830">
<div class="a" style="left:0;top:0;width:346px;height:360px;background:radial-gradient(ellipse at 50% 80%,#a9c2cd 0 25%,transparent 50%),linear-gradient(#1d252c,#2d3a44)"></div>
<div class="a" style="left:120px;top:50px;width:80px;height:95px;border-radius:45%;background:#b8907c;opacity:.7"></div>
<div class="a" style="left:128px;top:105px;width:68px;height:50px;border-radius:30% 30% 45% 45%;background:#8fa6b0"></div>
<div class="tm" style="color:#fff">9:27</div><svg class="sb" style="color:#fff;fill:#fff"><use href="#sb"/></svg>
<svg class="a" style="left:25px;top:50px;width:26px;height:24px;color:#fff"><use href="#back"/></svg>
<div class="a" style="left:292px;top:50px;color:#fff;font-size:18px">✎</div>
<div class="a" style="left:0;right:0;top:341px;bottom:0;background:#eeeefa;border-radius:24px 24px 0 0"></div>
<div class="a" style="left:26px;top:360px;font-size:17px;font-weight:bold">Alice Kindreon</div>
<div class="a" style="left:26px;top:389px;font-size:12px;color:#888">#293 Monthly Checkup</div>
<div class="a" style="left:0;right:0;top:422px;bottom:0;background:#fff;border-radius:24px 24px 0 0"></div>
<div class="a" style="left:26px;top:451px;width:45px;height:45px;border-radius:50%;background:#cbd7f5;color:#3062d0;text-align:center;line-height:45px;font-size:16px">⚇</div>
<div class="a" style="left:87px;top:455px;font-size:10px;color:#888">Doctor</div>
<div class="a" style="left:87px;top:479px;font-size:12px">Dr. Jane Cooper</div>
<div class="a" style="left:26px;top:520px;width:290px;height:1px;background:#f0f0f0"></div>
<div class="a" style="left:26px;top:545px;width:45px;height:45px;border-radius:50%;background:#cbd7f5;color:#3062d0;text-align:center;line-height:45px;font-size:15px">▦</div>
<div class="a" style="left:87px;top:548px;font-size:10px;color:#888">Date &amp; Time</div>
<div class="a" style="left:87px;top:572px;font-size:12px">Today, 26 Nov 8:00 am</div>
<div class="a" style="left:26px;top:632px;width:290px;height:45px;border-radius:23px;background:#3062d0;box-shadow:0 6px 12px rgba(48,98,208,.25)"></div>
<div class="a" style="left:30px;top:636px;width:38px;height:37px;border-radius:50%;background:#fff"></div>
<div class="c" style="top:647px;font-size:13px;font-weight:bold;color:#fff">Confirm</div>
<div class="c" style="top:689px;font-size:9.5px;color:#888">Swipe to confirm</div>
</div>

<div class="p" style="left:1539px;top:3508px;width:346px;height:744px;background:#e6e6e6">
<svg class="a" style="left:0;top:0" width="346" height="744" viewBox="0 0 346 744">
<g stroke="#fff" stroke-width="6" fill="none"><path d="M0 80L346 40M0 160L346 120M0 240L346 200M0 320L346 280M0 400L346 360M0 480L346 440M0 560L346 520M0 640L346 600M0 720L346 680"/><path d="M40 0L60 744M110 0L120 744M200 0L190 744M270 0L260 744"/><path d="M0 560L346 250M120 744L346 480"/></g>
<path d="M125 0L175 744" stroke="#f6d97a" stroke-width="9"/>
<rect x="180" y="190" width="40" height="55" fill="#bfe3c5"/><rect x="0" y="100" width="35" height="60" fill="#bfe3c5"/>
<path d="M75 360L173 345L169 255L250 245L251 215" stroke="#3062d0" stroke-width="3" fill="none"/>
<circle cx="76" cy="360" r="20" fill="#3062d0" opacity=".25"/><circle cx="76" cy="360" r="6" fill="#3062d0"/>
</svg>
<div class="a" style="left:190px;top:142px;font-size:18px;letter-spacing:5px;color:#7a8b9c;font-weight:bold">CIVIC CENT</div>
<div class="a" style="left:2px;top:196px;font-size:15px;color:#555">n Francisco City Hall</div>
<div class="a" style="left:40px;top:285px;font-size:15px;color:#c36a00">a Mano</div>
<div class="a" style="left:152px;top:300px;font-size:15px;color:#555">Twitter</div>
<div class="a" style="left:2px;top:340px;font-size:16px;letter-spacing:5px;color:#7a8b9c;font-weight:bold">S VALLEY</div>
<div class="a" style="left:10px;top:530px;font-size:15px;color:#c36a00">Zeitgeist</div>
<div class="a" style="left:32px;top:718px;font-size:13px;color:#3062d0">16th St Mission</div>
<div class="a" style="left:218px;top:154px;width:62px;height:72px;border-radius:6px;border:2px solid #fff"><div class="ph2" style="width:100%;height:100%;border-radius:4px"></div></div>
<div class="tm">9:27</div><svg class="sb"><use href="#sb"/></svg>
<div class="a" style="left:25px;top:44px;width:290px;height:44px;background:#fff;border-radius:6px;box-shadow:0 2px 6px rgba(0,0,0,.08)"><div class="a" style="left:18px;top:14px;width:15px;height:15px;border-radius:50%;border:2px solid #3062d0;background:radial-gradient(#3062d0 3px,#fff 4px)"></div><div class="a" style="left:55px;top:15px;font-size:12px;color:#bbb">Dr. Halley Fox</div></div>
<div class="a" style="left:27px;top:583px;width:288px;height:100px;background:#fff;border-radius:8px">
<div class="a ph2" style="left:8px;top:10px;width:80px;height:80px;border-radius:6px"></div>
<div class="a" style="left:98px;top:14px;font-size:14px">Dr. Jane Cooper</div>
<div class="a" style="left:98px;top:36px;font-size:13px;color:#3062d0;letter-spacing:2px">★★★★<span style="color:#ddd">★</span></div>
<div class="a" style="left:98px;top:66px;font-size:13px">⊙ 3.8 mi &nbsp; ♙ 4 min</div></div>
</div>

<!-- ROW 6 -->
<div class="p cut" style="left:213px;top:4332px;width:346px;background:#f8f9fd">
<div class="tm">9:27</div><svg class="sb"><use href="#sb"/></svg>
<svg class="a" style="left:25px;top:52px;width:26px;height:24px;color:#333"><use href="#back"/></svg>
<div class="c hd" style="top:54px">PAYMENT</div>
<svg class="a" style="left:296px;top:52px;width:22px;height:22px;color:#333"><use href="#srch"/></svg>
<div class="a" style="left:29px;top:91px;width:290px;height:62px;border-radius:10px;background:#fff;box-shadow:0 2px 6px rgba(0,0,0,.05)"></div>
<div class="a" style="left:44px;top:108px;width:27px;height:27px;border-radius:50%;background:#cbd7f5"></div>
<div class="a" style="left:88px;top:108px;font-size:7px;color:#888">Doctor</div><div class="a" style="left:88px;top:122px;font-size:8.5px">Dr. Jane Cooper</div>
<div class="a" style="left:178px;top:108px;width:27px;height:27px;border-radius:50%;background:#cbd7f5"></div>
<div class="a" style="left:214px;top:110px;font-size:7px;color:#888">Date &amp; Time</div><div class="a" style="left:214px;top:124px;font-size:8.5px">Today, 26 Nov 8:00 am</div>
<div class="a" style="left:82px;top:189px;font-size:11px;color:#333">Paypal</div>
<div class="a" style="left:149px;top:181px;width:59px;height:30px;border-radius:5px;background:#3062d0;color:#fff;font-size:11px;text-align:center;line-height:30px">Card</div>
<div class="a" style="left:236px;top:189px;font-size:11px;color:#333">Skrill</div>
<div class="a" style="left:27px;top:239px;width:291px;height:166px;border-radius:10px;background:radial-gradient(circle at 110% 110%,#cf4356 0 60%,transparent 61%),#dc5062;color:#fff">
<div class="a" style="left:22px;top:20px;width:15px;height:15px;border-radius:50%;background:#eb001b"></div><div class="a" style="left:31px;top:20px;width:15px;height:15px;border-radius:50%;background:#f79e1b;opacity:.9"></div>
<div class="a" style="left:54px;top:21px;font-size:11px">mastercard</div>
<div class="a" style="left:17px;top:70px;font-size:19px">2424</div><div class="a" style="left:96px;top:75px;font-size:12px">****</div><div class="a" style="left:164px;top:75px;font-size:12px">****</div><div class="a" style="right:12px;top:70px;font-size:19px">2424</div>
<div class="a" style="left:17px;top:120px;font-size:9.5px;line-height:13px">Expire date<br>03 / 23</div>
<div class="a" style="left:200px;top:119px;width:76px;height:31px;border-radius:16px;background:#fff;color:#333;font-size:11px;text-align:center;line-height:31px">CVV</div></div>
<div class="a" style="left:27px;top:432px;width:291px;height:167px;border-radius:10px;background:#4a62a0;color:#fff">
<div class="a" style="left:27px;top:22px;font-size:14px;font-weight:bold;font-style:italic">VISA</div>
<div class="a" style="left:17px;top:75px;font-size:19px">6756</div><div class="a" style="left:96px;top:80px;font-size:12px">****</div><div class="a" style="left:164px;top:80px;font-size:12px">****</div><div class="a" style="right:12px;top:75px;font-size:19px">5149</div>
<div class="a" style="left:17px;top:121px;font-size:9.5px;line-height:13px">Expire date<br>03 / 23</div>
<div class="a" style="left:200px;top:118px;width:76px;height:31px;border-radius:16px;background:#fff;color:#333;font-size:11px;text-align:center;line-height:31px">CVV</div></div>
<div class="btn" style="left:27px;top:631px;width:291px;height:45px;font-weight:normal">Add Card</div>
</div>

<div class="p cut" style="left:655px;top:4332px;width:346px;background:#f8f9fd">
<div class="a" style="left:0;right:0;top:0;height:80px;background:#fff"></div>
<div class="tm">9:27</div><svg class="sb"><use href="#sb"/></svg>
<svg class="a" style="left:27px;top:44px;width:26px;height:24px;color:#333"><use href="#back"/></svg>
<div class="c hd" style="top:46px">MESSAGES</div>
<svg class="a" style="left:294px;top:44px;width:22px;height:22px;color:#333"><use href="#srch"/></svg>
<div class="mrow" style="top:80px"><div class="av ph1"></div><div class="a" style="left:90px;top:26px;font-size:10px;color:#999">Cardiologist</div><div class="a" style="left:90px;top:41px;font-size:12px">Dr. Halley Fox</div><div class="a" style="left:90px;top:61px;font-size:9px;color:#888">Hey, Lorem ipsum dolor set del calor...</div><div class="a" style="right:27px;top:26px;font-size:9.5px;color:#888">10:29 AM</div></div>
<div class="mrow" style="top:171px;background:#e8ecf8"><div class="av ph4"></div><div class="a" style="left:90px;top:26px;font-size:10px;color:#999">Ophtalmologist</div><div class="a" style="left:90px;top:41px;font-size:12px">Dr. Arlene McCoy</div><div class="a" style="left:90px;top:61px;font-size:9px;color:#888">Hey, Lorem ipsum dolor set del calor...</div><div class="a" style="right:27px;top:26px;font-size:9.5px;color:#888">11:49 AM</div><div class="a" style="left:300px;top:55px;width:18px;height:18px;border-radius:50%;background:#3062d0;color:#fff;font-size:9px;text-align:center;line-height:18px">2</div></div>
<div class="mrow" style="top:262px"><div class="av ph3"></div><div class="a" style="left:90px;top:26px;font-size:10px;color:#999">Hermatologist</div><div class="a" style="left:90px;top:41px;font-size:12px">Dr. Eleanor Pena</div><div class="a" style="left:90px;top:61px;font-size:9px;color:#888">Hey, Lorem ipsum dolor set del calor...</div><div class="a" style="right:27px;top:26px;font-size:9.5px;color:#888">Yesterday</div></div>
<div class="mrow" style="top:353px"><div class="av" style="background:linear-gradient(#3d8fd8 0 35%,#e5cdb8 35% 60%,#e9eef2 60%)"></div><div class="a" style="left:90px;top:26px;font-size:10px;color:#999">Cardiologist</div><div class="a" style="left:90px;top:41px;font-size:12px">Dr. Christina Lob</div><div class="a" style="left:90px;top:61px;font-size:9px;color:#888">Hey, Lorem ipsum dolor set del calor...</div><div class="a" style="right:27px;top:26px;font-size:9.5px;color:#888">Yesterday</div></div>
<div class="mrow" style="top:444px;background:#e8ecf8"><div class="av" style="background:linear-gradient(#7a6a5a,#4d7fb4 60%,#3a5f8a)"></div><div class="a" style="left:90px;top:26px;font-size:10px;color:#999">Cardiologist</div><div class="a" style="left:90px;top:41px;font-size:12px">Dr. Tom Johnson</div><div class="a" style="left:90px;top:61px;font-size:9px;color:#888">Hey, Lorem ipsum dolor set del calor...</div><div class="a" style="right:27px;top:26px;font-size:9.5px;color:#888">3 July</div><div class="a" style="left:300px;top:55px;width:18px;height:18px;border-radius:50%;background:#3062d0;color:#fff;font-size:9px;text-align:center;line-height:18px">3</div></div>
<div class="mrow" style="top:535px"><div class="av ph2"></div><div class="a" style="left:90px;top:26px;font-size:10px;color:#999">Cardiologist</div><div class="a" style="left:90px;top:41px;font-size:12px">Dr. Jane Cooper</div><div class="a" style="left:90px;top:61px;font-size:9px;color:#888">Hey, Lorem ipsum dolor set del calor...</div><div class="a" style="right:27px;top:26px;font-size:9.5px;color:#888">1 July</div></div>
<div class="mrow" style="top:626px"><div class="av ph3"></div><div class="a" style="left:90px;top:26px;font-size:10px;color:#999">Hermatologist</div><div class="a" style="right:27px;top:26px;font-size:9.5px;color:#888">31 June</div></div>
</div>

<div class="p cut" style="left:1097px;top:4332px;width:346px;background:#e8ecf8">
<div class="tm">9:27</div><svg class="sb"><use href="#sb"/></svg>
<svg class="a" style="left:22px;top:68px;width:26px;height:24px;color:#3062d0"><use href="#back"/></svg>
<div class="a" style="left:155px;top:52px;width:36px;height:36px;border-radius:50%"><div class="ph2" style="width:100%;height:100%;border-radius:50%"></div></div>
<div class="a" style="left:184px;top:51px;width:8px;height:8px;border-radius:50%;background:#2ecc71"></div>
<div class="c" style="top:93px;font-size:13px;font-weight:bold;color:#333">Dr. Jane</div>
<div class="a" style="left:264px;top:68px;font-size:18px;color:#3062d0">✆</div>
<div class="a" style="left:299px;top:73px;width:16px;height:13px;background:#3062d0;border-radius:2px"></div><div class="a" style="left:316px;top:76px;width:5px;height:8px;background:#3062d0"></div>
<div class="c" style="top:123px;font-size:10px;color:#333">Friday 02-04-2021</div>
<div class="bub" style="left:20px;top:154px;width:119px;height:30px">Lorem ipsum</div>
<div class="bub" style="left:20px;top:197px;width:244px;height:46px">Lorem ipsum dolor sit amet,<br>consectetur adipiscing elit. Et.</div>
<div class="c" style="top:257px;font-size:10px;color:#333">Today</div>
<div class="bub b" style="left:207px;top:286px;width:116px;height:30px">Vulputate.</div>
<div class="bub b" style="left:73px;top:330px;width:250px;height:31px">Sed cras amet et viverra vulputate.</div>
<div class="bub" style="left:20px;top:375px;width:172px;height:30px">Molestie eu feugiat et.</div>
<div class="bub b" style="left:149px;top:419px;width:175px;height:30px">Ultricies vitae fusce sit.</div>
<div class="bub" style="left:20px;top:463px;width:154px;height:30px">Accumsan nisl orci.</div>
<div class="bub b" style="left:199px;top:507px;width:124px;height:30px">In arcu est vel.</div>
<div class="bub" style="left:20px;top:551px;width:240px;height:45px">Lorem ipsum dolor sit amet,<br>consectetur adipiscing elit. Id.</div>
<div class="a" style="left:20px;top:612px;width:60px;height:26px;border-radius:13px;background:#e0e3ec;font-size:0;padding:9px 0 0 10px"><span style="display:inline-block;width:8px;height:8px;border-radius:50%;background:#8a93a8;margin-right:4px"></span><span style="display:inline-block;width:8px;height:8px;border-radius:50%;background:#a8b0c0;margin-right:4px"></span><span style="display:inline-block;width:8px;height:8px;border-radius:50%;background:#c0c6d2"></span></div>
<div class="a" style="left:24px;top:658px;width:298px;height:40px;border-radius:8px;background:#fff"></div>
</div>

<div class="p cut" style="left:1539px;top:4332px;width:346px;background:#1c1f24">
<div class="a" style="left:0;top:120px;width:346px;height:624px;background:radial-gradient(ellipse at 58% 30%,#b48e7c 0 9%,transparent 16%),radial-gradient(ellipse at 60% 40%,#9cb0ba 0 10%,transparent 16%),radial-gradient(ellipse at 50% 75%,#a9c6d3 0 30%,transparent 55%),linear-gradient(#1c1f24,#2d3e4a)"></div>
<div class="a" style="left:31px;top:40px;font-size:21px;color:#fff">Jane</div>
<div class="a" style="left:31px;top:64px;font-size:10px;color:#fff">Duration : 05:00 min</div>
<div class="a" style="left:268px;top:43px;width:13px;height:11px;border-radius:2px;background:#fff"></div>
<div class="a" style="left:302px;top:40px;font-size:14px;color:#fff">✆</div>
<div class="a" style="left:201px;top:415px;width:108px;height:153px;border-radius:12px;border:2px solid #fff;background:linear-gradient(#8fb5e0,#d7e3ee 40%,#4a3a30 75%,#2a2520)"></div>
<div class="a" style="left:66px;top:645px;width:40px;height:40px;border-radius:50%;background:#3a3f48"></div>
<div class="a" style="left:146px;top:635px;width:50px;height:50px;border-radius:50%;background:#ff1f1f"></div>
<div class="a" style="left:233px;top:645px;width:40px;height:40px;border-radius:50%;background:#3a3f48"></div>
</div>
</body></html>
